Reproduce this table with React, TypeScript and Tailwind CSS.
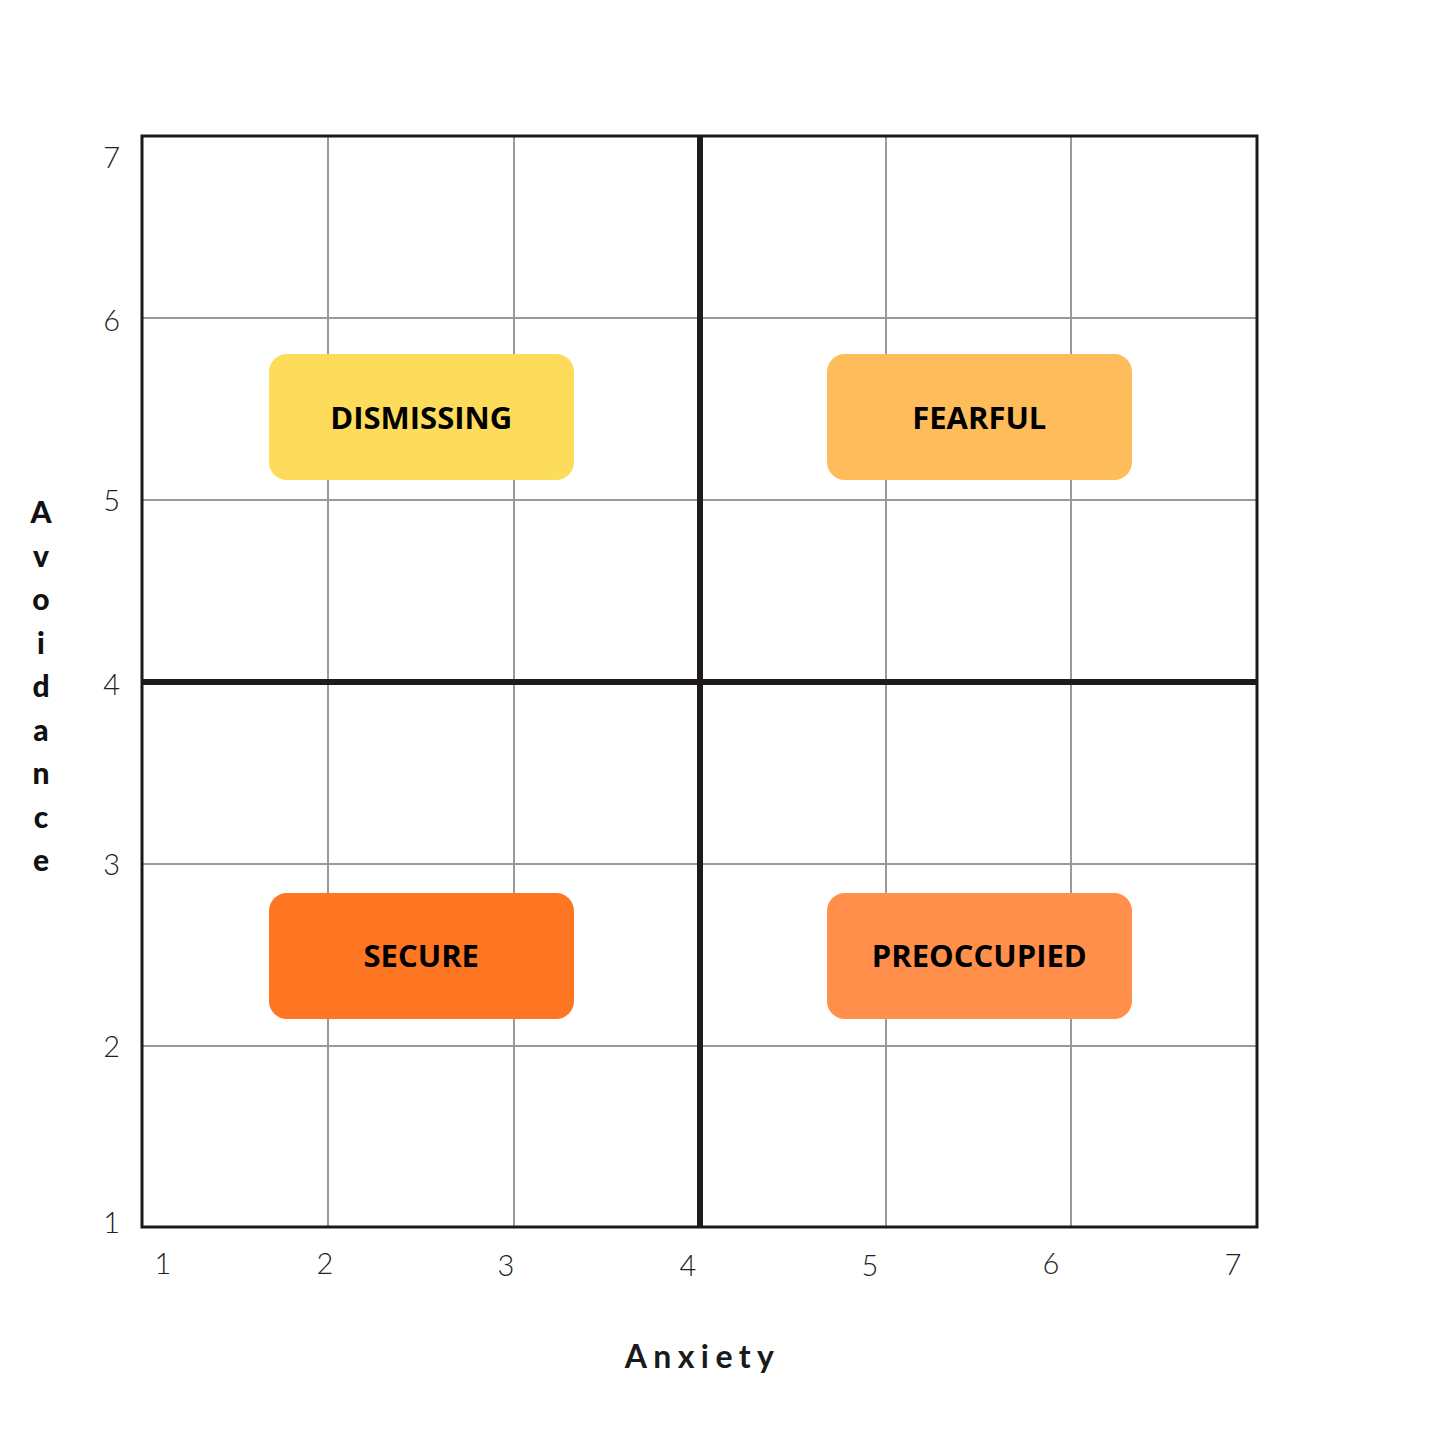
// tick labels sit at hand-placed spots, not on an even step
const yTicks = [
  { t: '7', mt: 'mt-0' },
  { t: '6', mt: 'mt-[133px]' },
  { t: '5', mt: 'mt-[150px]' },
  { t: '4', mt: 'mt-[154px]' },
  { t: '3', mt: 'mt-[150px]' },
  { t: '2', mt: 'mt-[152px]' },
  { t: '1', mt: 'mt-[146px]' },
]
const xTicks = [
  { t: '1', ml: 'ml-0', mt: 'mt-0' },
  { t: '2', ml: 'ml-[122px]', mt: 'mt-0' },
  { t: '3', ml: 'ml-[141px]', mt: 'mt-[2px]' },
  { t: '4', ml: 'ml-[142px]', mt: 'mt-[2px]' },
  { t: '5', ml: 'ml-[142px]', mt: 'mt-[2px]' },
  { t: '6', ml: 'ml-[141px]', mt: 'mt-0' },
  { t: '7', ml: 'ml-[142px]', mt: 'mt-[1px]' },
]

const quadrants = [
  { label: 'DISMISSING', bg: 'bg-[#fedc5b]', pad: 'pt-[18px] pl-[3px]' },
  { label: 'FEARFUL', bg: 'bg-[#febc5b]', pad: 'pt-[18px]' },
  { label: 'SECURE', bg: 'bg-[#fe7522]', pad: 'pl-[3px]' },
  { label: 'PREOCCUPIED', bg: 'bg-[#ff8f4a]', pad: '' },
]

// grid line positions, px inside the plot
const thin = [188, 374, 746, 931]
const thinY = [184, 366, 730, 912]

function Grid() {
  return (
    <svg className="absolute inset-0" width="1119" height="1095" viewBox="0 0 1119 1095">
      {thin.map(x => (
        <line key={'v' + x} x1={x} y1={2} x2={x} y2={1093} stroke="#9a9a9a" strokeWidth="2" />
      ))}
      {thinY.map(y => (
        <line key={'h' + y} x1={2} y1={y} x2={1117} y2={y} stroke="#9a9a9a" strokeWidth="2" />
      ))}
      <line x1={560} y1={2} x2={560} y2={1093} stroke="#1f1b1b" strokeWidth="6" />
      <line x1={2} y1={548} x2={1117} y2={548} stroke="#1f1b1b" strokeWidth="6" />
      <rect x={2} y={2} width={1115} height={1091} fill="none" stroke="#1a1a1a" strokeWidth="3" />
    </svg>
  )
}

export default function App() {
  return (
    <div className="h-[1456px] w-[1456px] overflow-hidden bg-white pt-[134px] font-['Lato',sans-serif] text-[#222]">
      <div className="flex h-[1095px] items-start">
        <div className="flex h-[1095px] w-[82px] flex-col items-center justify-center pt-[9px] text-[30px] font-black leading-[43.5px] text-[#111]">
          {'Avoidance'.split('').map((c, i) => (
            <span key={i}>{c}</span>
          ))}
        </div>

        <div className="flex h-[1095px] w-[58px] flex-col pr-[20px] pt-[8px] text-right text-[29px] font-light leading-[30px] text-[#222]">
          {yTicks.map(y => (
            <span key={y.t} className={`block h-[30px] ${y.mt}`}>{y.t}</span>
          ))}
        </div>

        <div className="relative h-[1095px] w-[1119px]">
          <Grid />
          <div className="relative grid h-full grid-cols-2 grid-rows-[548px_547px]">
            {quadrants.map(q => (
              <div key={q.label} className={`flex items-center justify-center ${q.pad}`}>
                <div
                  className={`flex h-[126px] w-[305px] items-center justify-center rounded-[18px] ${q.bg} font-['Open_Sans',sans-serif] text-[31px] font-bold text-black`}
                >
                  {q.label}
                </div>
              </div>
            ))}
          </div>
        </div>
      </div>

      <div className="ml-[143px] mt-[19px] flex items-start text-[29px] font-light leading-[30px] text-[#222]">
        {xTicks.map(x => (
          <span key={x.t} className={`w-[40px] shrink-0 text-center ${x.ml} ${x.mt}`}>{x.t}</span>
        ))}
      </div>

      <div className="ml-[140px] mt-[56px] w-[1119px] pl-[6px] text-center text-[32px] font-bold leading-[40px] tracking-[0.2em] text-[#1a1a1a]">
        Anxiety
      </div>
    </div>
  )
}
